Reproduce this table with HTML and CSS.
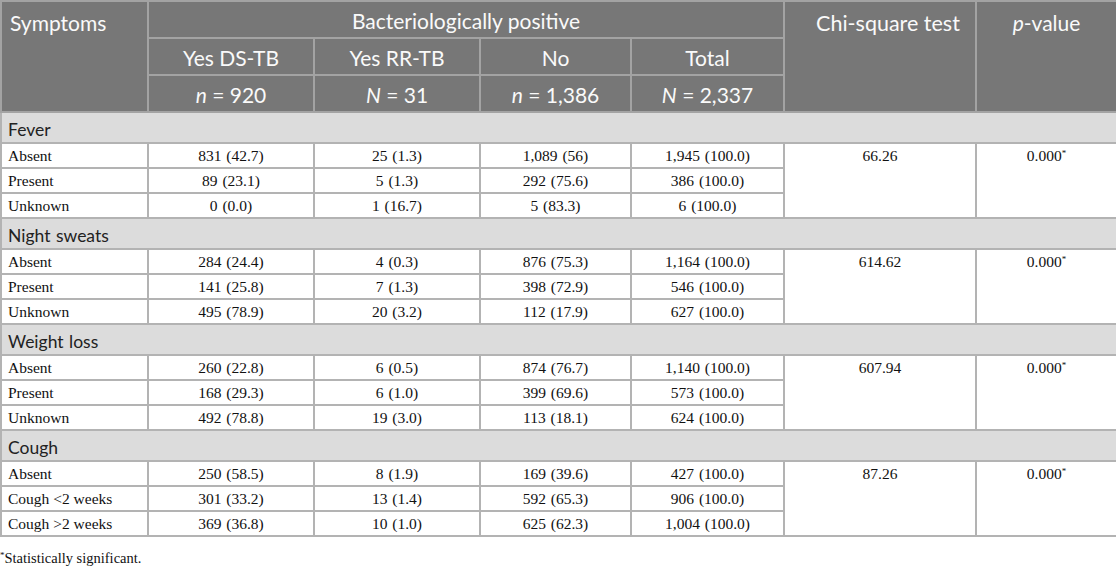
FILE: index.html
```html
<!DOCTYPE html>
<html lang="en">
<head>
  <meta charset="UTF-8">
  <meta name="viewport" content="width=device-width, initial-scale=1.0">
  <title>Symptoms by bacteriological status</title>
  <link rel="stylesheet" href="styles.css">
</head>
<body>
  <table class="results">
    <colgroup>
      <col class="col-label">
      <col class="col-ds">
      <col class="col-rr">
      <col class="col-no">
      <col class="col-total">
      <col class="col-chi">
      <col class="col-p">
    </colgroup>
    <thead>
      <tr>
        <th rowspan="3" class="left">Symptoms</th>
        <th colspan="4">Bacteriologically positive</th>
        <th rowspan="3" class="chi">Chi-square test</th>
        <th rowspan="3" class="pval"><i>p</i>-value</th>
      </tr>
      <tr>
        <th>Yes DS-TB</th>
        <th>Yes RR-TB</th>
        <th>No</th>
        <th>Total</th>
      </tr>
      <tr>
        <th><i>n</i> = 920</th>
        <th><i>N</i> = 31</th>
        <th><i>n</i> = 1,386</th>
        <th><i>N</i> = 2,337</th>
      </tr>
    </thead>
    <tbody>
      <tr class="group"><td colspan="7">Fever</td></tr>
      <tr>
        <td class="left">Absent</td><td>831 (42.7)</td><td>25 (1.3)</td><td>1,089 (56)</td><td>1,945 (100.0)</td>
        <td rowspan="3" class="stat">66.26</td><td rowspan="3" class="stat">0.000<sup>*</sup></td>
      </tr>
      <tr><td class="left">Present</td><td>89 (23.1)</td><td>5 (1.3)</td><td>292 (75.6)</td><td>386 (100.0)</td></tr>
      <tr><td class="left">Unknown</td><td>0 (0.0)</td><td>1 (16.7)</td><td>5 (83.3)</td><td>6 (100.0)</td></tr>

      <tr class="group"><td colspan="7">Night sweats</td></tr>
      <tr>
        <td class="left">Absent</td><td>284 (24.4)</td><td>4 (0.3)</td><td>876 (75.3)</td><td>1,164 (100.0)</td>
        <td rowspan="3" class="stat">614.62</td><td rowspan="3" class="stat">0.000<sup>*</sup></td>
      </tr>
      <tr><td class="left">Present</td><td>141 (25.8)</td><td>7 (1.3)</td><td>398 (72.9)</td><td>546 (100.0)</td></tr>
      <tr><td class="left">Unknown</td><td>495 (78.9)</td><td>20 (3.2)</td><td>112 (17.9)</td><td>627 (100.0)</td></tr>

      <tr class="group"><td colspan="7">Weight loss</td></tr>
      <tr>
        <td class="left">Absent</td><td>260 (22.8)</td><td>6 (0.5)</td><td>874 (76.7)</td><td>1,140 (100.0)</td>
        <td rowspan="3" class="stat">607.94</td><td rowspan="3" class="stat">0.000<sup>*</sup></td>
      </tr>
      <tr><td class="left">Present</td><td>168 (29.3)</td><td>6 (1.0)</td><td>399 (69.6)</td><td>573 (100.0)</td></tr>
      <tr><td class="left">Unknown</td><td>492 (78.8)</td><td>19 (3.0)</td><td>113 (18.1)</td><td>624 (100.0)</td></tr>

      <tr class="group"><td colspan="7">Cough</td></tr>
      <tr>
        <td class="left">Absent</td><td>250 (58.5)</td><td>8 (1.9)</td><td>169 (39.6)</td><td>427 (100.0)</td>
        <td rowspan="3" class="stat">87.26</td><td rowspan="3" class="stat">0.000<sup>*</sup></td>
      </tr>
      <tr><td class="left">Cough &lt;2 weeks</td><td>301 (33.2)</td><td>13 (1.4)</td><td>592 (65.3)</td><td>906 (100.0)</td></tr>
      <tr><td class="left">Cough &gt;2 weeks</td><td>369 (36.8)</td><td>10 (1.0)</td><td>625 (62.3)</td><td>1,004 (100.0)</td></tr>
    </tbody>
  </table>

  <p class="footnote"><sup>*</sup>Statistically significant.</p>
</body>
</html>
```

FILE: styles.css
```css
body {
  margin: 0;
  background-color: #fff;
  color: #111;
  font-family: "Liberation Serif", "Times New Roman", serif;
}
.results {
  width: 1116px;
  border-collapse: collapse;
  table-layout: fixed;
  border: 2px solid #a9a9a9;
}
.col-label { width: 147px; }
.col-ds { width: 166px; }
.col-rr { width: 166px; }
.col-no { width: 151px; }
.col-total { width: 153px; }
.col-chi { width: 192px; }
.col-p { width: 141px; }

th {
  background-color: #777;
  color: #fafafa;
  font-family: Lato, "Open Sans", sans-serif;
  font-weight: 400;
  font-size: 21px;
  line-height: 24px;
  height: 32px;
  padding: 3px 6px 0;
  border: 2px solid #a3a3a3;
  text-align: center;
  vertical-align: middle;
}
th.left,
th.chi,
th.pval {
  vertical-align: top;
  padding-top: 9px;
}
th.left {
  text-align: left;
  padding-left: 8px;
}
th.chi {
  padding-left: 22px;
  font-size: 21.5px;
}
td {
  font-size: 15.5px;
  height: 23px;
  padding: 0 6px;
  border: 2px solid #b3b3b3;
  text-align: center;
  vertical-align: middle;
  line-height: 19px;
  word-spacing: 1px;
}
td.left {
  text-align: left;
  word-spacing: 0;
}
td.stat {
  vertical-align: top;
  padding-top: 2px;
}
.group td {
  background-color: #dcdcdc;
  font-family: Lato, "Open Sans", sans-serif;
  font-size: 17.5px;
  text-align: left;
  height: 26px;
  padding: 3px 6px 0;
  color: #222;
}
sup {
  font-size: 9px;
  vertical-align: 5px;
  line-height: 0;
}
.footnote {
  margin: 13px 0 0;
  font-size: 14.5px;
  line-height: 16px;
}
.footnote sup {
  font-size: 9px;
}
```
